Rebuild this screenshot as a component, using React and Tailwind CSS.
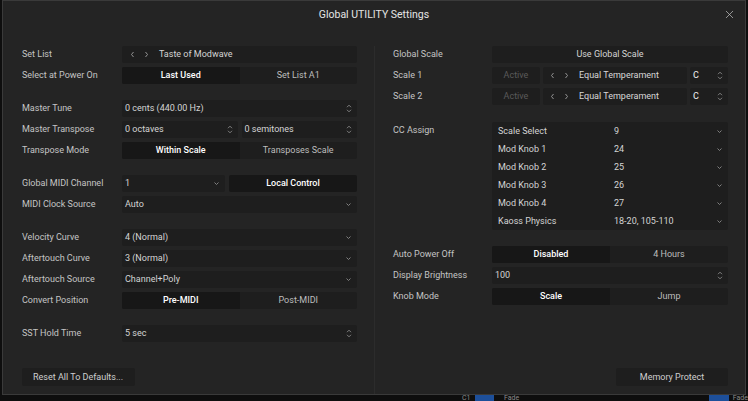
import { X } from 'lucide-react';

const box = 'h-[17px] bg-[#1e1e1e] rounded-[2px] flex items-center';

function Spinner() {
  return (
    <svg width="6" height="9" viewBox="0 0 6 9" className="shrink-0">
      <path d="M1 3.2 L3 1.2 L5 3.2 M1 5.8 L3 7.8 L5 5.8" fill="none" stroke="#8a8a8a" strokeWidth="0.9" />
    </svg>
  );
}

function Chevron() {
  return (
    <svg width="7" height="5" viewBox="0 0 7 5" className="shrink-0">
      <path d="M1.5 1.5 L3.5 3.5 L5.5 1.5" fill="none" stroke="#8a8a8a" strokeWidth="0.9" />
    </svg>
  );
}

function Arrows() {
  return (
    <div className="flex items-center gap-[9px]">
      <svg width="5" height="7" viewBox="0 0 5 7">
        <path d="M3.5 1 L1.5 3.5 L3.5 6" fill="none" stroke="#a0a0a0" strokeWidth="0.9" />
      </svg>
      <svg width="5" height="7" viewBox="0 0 5 7">
        <path d="M1.5 1 L3.5 3.5 L1.5 6" fill="none" stroke="#a0a0a0" strokeWidth="0.9" />
      </svg>
    </div>
  );
}

function Row({ label, children, labelW = 'w-[100px]' }) {
  return (
    <div className="flex items-center h-[17px]">
      <div className={`${labelW} shrink-0 text-[#c4c4c4]`}>{label}</div>
      <div className="flex-1 flex gap-[4px] min-w-0">{children}</div>
    </div>
  );
}

function Select({ value, spin, className = 'flex-1' }) {
  return (
    <div className={`${box} ${className} pl-[3px] pr-[5px] justify-between`}>
      <span className="text-[#d4d4d4]">{value}</span>
      {spin ? <Spinner /> : <Chevron />}
    </div>
  );
}

function Segmented({ a, b }) {
  return (
    <div className={`${box} flex-1 overflow-hidden`}>
      <div className="w-1/2 h-full bg-[#171717] flex items-center justify-center font-medium text-white">{a}</div>
      <div className="w-1/2 h-full flex items-center justify-center text-[#bdbdbd]">{b}</div>
    </div>
  );
}

function ScaleRow({ label }) {
  return (
    <Row label={label} labelW="w-[99px]">
      <div className="flex-1 flex gap-[3px]">
        <div className={`${box} w-[48px] justify-center text-[#5a5a5a]`}>Active</div>
        <div className={`${box} flex-1 pl-[7px] gap-[10px]`}>
          <Arrows />
          <span className="text-[#d8d8d8]">Equal Temperament</span>
        </div>
        <div className={`${box} w-[38px] pl-[3px] pr-[5px] justify-between`}>
          <span className="text-[#d8d8d8] font-medium">C</span>
          <Spinner />
        </div>
      </div>
    </Row>
  );
}

const cc = [
  ['Scale Select', '9'],
  ['Mod Knob 1', '24'],
  ['Mod Knob 2', '25'],
  ['Mod Knob 3', '26'],
  ['Mod Knob 4', '27'],
  ['Kaoss Physics', '18-20, 105-110'],
];

export default function App() {
  return (
    <div className="w-[748px] h-[401px] bg-[#0e0e0e] flex flex-col overflow-hidden font-['Roboto',sans-serif] text-[9px] leading-none">
      <div className="mx-[2px] h-[395px] shrink-0 bg-[#242424] border border-[#3a3a3a] flex flex-col">
        <div className="h-[28px] shrink-0 flex items-center relative">
          <div className="flex-1 text-center text-[10.5px] text-[#e4e4e4]">Global UTILITY Settings</div>
          <X className="absolute right-[9px] top-[7px] text-[#c4c4c4]" size={13} strokeWidth={1.3} />
        </div>
        <div className="flex-1 flex pt-[17px]">
          <div className="w-[372px] shrink-0 pl-[19px] pr-[17px] flex flex-col border-r border-[#2c2c2c]">
            <div className="flex flex-col gap-[4px]">
              <Row label="Set List">
                <div className={`${box} flex-1 pl-[8px] gap-[10px]`}>
                  <Arrows />
                  <span className="text-[#d4d4d4]">Taste of Modwave</span>
                </div>
              </Row>
              <Row label="Select at Power On">
                <Segmented a="Last Used" b="Set List A1" />
              </Row>
            </div>
            <div className="flex flex-col gap-[4px] mt-[16px]">
              <Row label="Master Tune">
                <Select value="0 cents (440.00 Hz)" spin />
              </Row>
              <Row label="Master Transpose">
                <Select value="0 octaves" spin />
                <Select value="0 semitones" spin />
              </Row>
              <Row label="Transpose Mode">
                <Segmented a="Within Scale" b="Transposes Scale" />
              </Row>
            </div>
            <div className="flex flex-col gap-[4px] mt-[16px]">
              <Row label="Global MIDI Channel">
                <Select value="1" className="w-[103px]" />
                <div className="h-[17px] flex-1 bg-[#171717] rounded-[2px] flex items-center justify-center font-medium text-white">
                  Local Control
                </div>
              </Row>
              <Row label="MIDI Clock Source">
                <Select value="Auto" />
              </Row>
            </div>
            <div className="flex flex-col gap-[4px] mt-[16px]">
              <Row label="Velocity Curve">
                <Select value="4 (Normal)" />
              </Row>
              <Row label="Aftertouch Curve">
                <Select value="3 (Normal)" />
              </Row>
              <Row label="Aftertouch Source">
                <Select value="Channel+Poly" />
              </Row>
              <Row label="Convert Position">
                <Segmented a="Pre-MIDI" b="Post-MIDI" />
              </Row>
            </div>
            <div className="flex flex-col gap-[4px] mt-[16px]">
              <Row label="SST Hold Time">
                <Select value="5 sec" spin />
              </Row>
            </div>
            <div className="mt-auto mb-[8px] h-[18px] w-[113px] bg-[#1e1e1e] rounded-[2px] flex items-center pl-[11px] text-[#cfcfcf]">
              Reset All To Defaults...
            </div>
          </div>
          <div className="flex-1 pl-[18px] pr-[17px] flex flex-col">
            <div className="flex flex-col gap-[4px]">
              <Row label="Global Scale" labelW="w-[99px]">
                <div className={`${box} flex-1 justify-center text-[#d4d4d4]`}>Use Global Scale</div>
              </Row>
              <ScaleRow label="Scale 1" />
              <ScaleRow label="Scale 2" />
            </div>
            <div className="flex mt-[17px]">
              <div className="w-[99px] shrink-0 pt-[4px] text-[#c4c4c4]">CC Assign</div>
              <div className="flex-1 bg-[#1e1e1e] rounded-[2px] flex flex-col">
                {cc.map(([name, v]) => (
                  <div key={name} className="h-[18px] flex items-center pl-[6px] pr-[5px] text-[#d4d4d4]">
                    <span className="w-[116px]">{name}</span>
                    <span className="flex-1">{v}</span>
                    <Chevron />
                  </div>
                ))}
              </div>
            </div>
            <div className="flex flex-col gap-[4px] mt-[16px]">
              <Row label="Auto Power Off" labelW="w-[99px]">
                <Segmented a="Disabled" b="4 Hours" />
              </Row>
              <Row label="Display Brightness" labelW="w-[99px]">
                <Select value="100" spin />
              </Row>
              <Row label="Knob Mode" labelW="w-[99px]">
                <Segmented a="Scale" b="Jump" />
              </Row>
            </div>
            <div className="mt-auto mb-[8px] self-end h-[18px] w-[112px] bg-[#1e1e1e] rounded-[2px] flex items-center justify-center text-[#cfcfcf]">
              Memory Protect
            </div>
          </div>
        </div>
      </div>
      <div className="flex-1 flex items-start text-[7px] text-[#8a8a8a] overflow-hidden">
        <div className="w-[462px] shrink-0" />
        <span className="mr-[4px]">C1</span>
        <div className="w-[25px] h-[6px] bg-[#1d4f9a]" />
        <span className="ml-[10px]">Fade</span>
        <div className="w-[190px] shrink-0" />
        <div className="w-[25px] h-[6px] bg-[#1d4f9a]" />
        <span className="ml-[4px]">Fade</span>
      </div>
    </div>
  );
}
